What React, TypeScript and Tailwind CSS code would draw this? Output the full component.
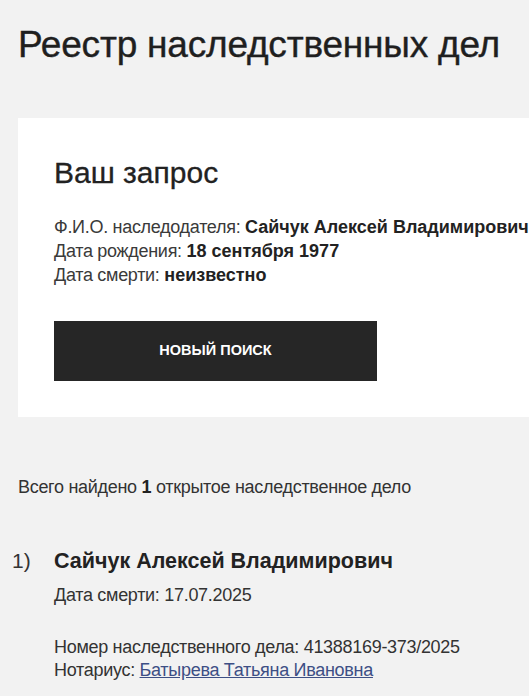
import React from "react";

const font = { fontFamily: '"Liberation Sans", Arial, sans-serif' };

export default function App() {
  return (
    <div className="min-h-[696px] w-[529px] overflow-hidden bg-[#f2f2f2] text-[#222]" style={font}>
      <div className="pl-[18px] pt-[23px]">
        {/* Title */}
        <h1 className="whitespace-nowrap text-[37px] leading-[44px] font-normal tracking-[-0.2px] text-[#1f1f1f] [-webkit-text-stroke:0.4px_#1f1f1f]">
          Реестр наследственных дел
        </h1>

        {/* Query card */}
        <div className="mt-[51px] mr-[-80px] bg-white pl-[36px] pt-[38px] pb-[36px]">
          <h2 className="text-[30px] leading-[34px] font-normal [-webkit-text-stroke:0.3px_#222]">Ваш запрос</h2>
          <div className="mt-[25px] whitespace-nowrap text-[18px] leading-[24px]">
            <div>
              <span className="text-[#3a3a3a] tracking-[-0.3px]">Ф.И.О. наследодателя: </span>
              <b>Сайчук Алексей Владимирович</b>
            </div>
            <div>
              <span className="text-[#3a3a3a] tracking-[-0.3px]">Дата рождения: </span>
              <b>18 сентября 1977</b>
            </div>
            <div>
              <span className="text-[#3a3a3a] tracking-[-0.3px]">Дата смерти: </span>
              <b>неизвестно</b>
            </div>
          </div>
          <button className="mt-[34px] flex h-[60px] w-[323px] items-center justify-center bg-[#262626] text-[14.5px] font-bold uppercase text-white">
            Новый поиск
          </button>
        </div>

        {/* Results */}
        <p className="mt-[58px] text-[18px] leading-[24px] tracking-[-0.3px] text-[#333]">
          Всего найдено <b className="text-[#222]">1</b> открытое наследственное дело
        </p>

        <div className="mt-[48px] flex">
          <div className="w-[42px] -ml-[6px] text-[21px] leading-[28px] text-[#333]">1)</div>
          <div className="flex-1">
            <div className="text-[21.5px] leading-[28px] font-bold">Сайчук Алексей Владимирович</div>
            <div className="mt-[8px] text-[18px] leading-[24px] tracking-[-0.3px] text-[#333]">
              Дата смерти: 17.07.2025
            </div>
            <div className="mt-[29px] text-[18px] leading-[23px] tracking-[-0.3px] text-[#333]">
              <div>Номер наследственного дела: 41388169-373/2025</div>
              <div>
                Нотариус:{" "}
                <a href="#" className="text-[#3d4f85] underline">
                  Батырева Татьяна Ивановна
                </a>
              </div>
            </div>
          </div>
        </div>
      </div>
    </div>
  );
}
